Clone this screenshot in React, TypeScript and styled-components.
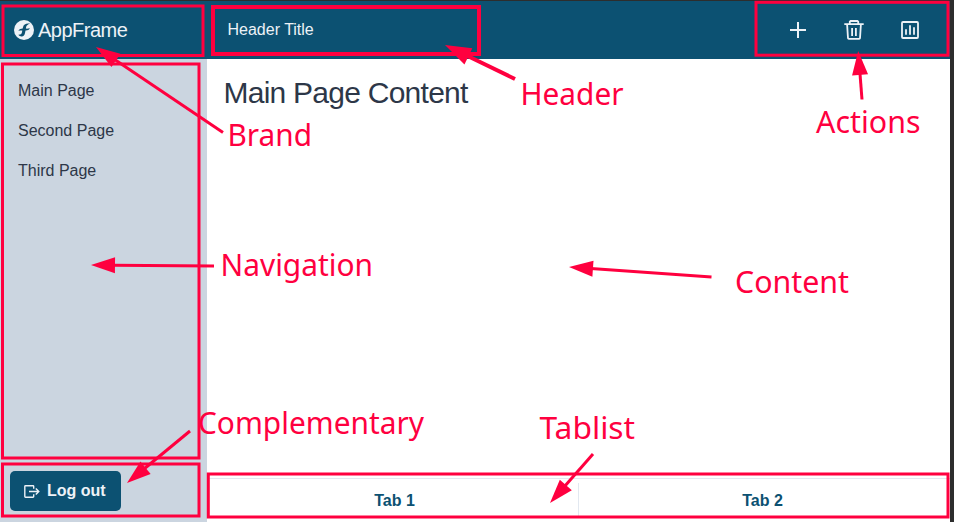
import React from "react";
import styled, { createGlobalStyle } from "styled-components";

const GlobalStyle = createGlobalStyle`
  * { box-sizing: border-box; }
  body { margin: 0; font-family: "Liberation Sans", Arial, sans-serif; font-size: 16px; color: #2d3748; }
`;

const accent = "#ff003f";
const brandBlue = "#0c5172";

const Window = styled.div`
  position: relative;
  width: 954px;
  height: 522px;
  overflow: hidden;
  background: #2d2d2d;
  padding: 1px 4px 0 0;
`;

const Frame = styled.div`
  display: grid;
  grid-template: 58px 1fr / 207px 1fr;
  height: 100%;
  background: #fff;
`;

const TopBar = styled.header`
  grid-column: 1 / -1;
  display: grid;
  grid-template-columns: 207px 1fr auto;
  align-items: center;
  background: ${brandBlue};
  color: #edf2f7;
`;

const Brand = styled.div`
  display: flex;
  align-items: center;
  gap: 4px;
  padding-left: 14px;
  font-size: 20px;
  letter-spacing: -0.5px;
  line-height: 24px;
`;

const HeaderTitle = styled.div`
  padding-left: 20.5px;
  line-height: 20px;
  padding-bottom: 1px;
`;

const Actions = styled.div`
  display: flex;
  gap: 32px;
  padding-right: 28px;
`;

const Sidebar = styled.aside`
  display: flex;
  flex-direction: column;
  background: #cbd5e0;
`;

const Navigation = styled.nav`
  flex: 1;
  display: flex;
  flex-direction: column;
  padding: 12px 18px;
`;

const NavItem = styled.a`
  line-height: 40px;
`;

const Complementary = styled.div`
  padding: 0 10px 11px;
`;

const LogoutButton = styled.button`
  display: flex;
  align-items: center;
  gap: 6px;
  width: 111px;
  height: 40px;
  padding: 0 0 0 13px;
  border: 0;
  border-radius: 5px;
  background: ${brandBlue};
  color: #edf2f7;
  font: bold 16px "Liberation Sans", Arial, sans-serif;
`;

const Main = styled.main`
  display: flex;
  flex-direction: column;
`;

const Content = styled.section`
  flex: 1;
  padding: 16px 16.5px;
`;

const Title = styled.h1`
  margin: 0;
  font-size: 30px;
  font-weight: 400;
  line-height: 36px;
  letter-spacing: -0.75px;
`;

const Tablist = styled.div`
  display: flex;
  height: 44px;
  padding: 4px 4px 0;
  border-top: 1px solid #e2e8f0;
`;

const Tab = styled.div<{ $divided?: boolean }>`
  flex: 1 1 0;
  height: 35px;
  border-right: ${(p) => (p.$divided ? "1px solid #e2e8f0" : "0")};
  text-align: center;
  line-height: 35px;
  font-weight: 700;
  color: ${brandBlue};
`;

const Annotations = styled.svg`
  position: absolute;
  inset: 0;
  fill: none;
  stroke: ${accent};
  stroke-width: 3;
`;

const Label = styled.text`
  fill: ${accent};
  stroke: none;
  font: 400 31px "Noto Sans", sans-serif;
`;

const Icon = styled.svg`
  display: block;
  flex: none;
  fill: none;
  stroke: currentColor;
`;

const frames = [
  { x: 3, y: 6, r: 203, b: 55.5 },
  { x: 2.5, y: 64, r: 199, b: 458 },
  { x: 2.5, y: 464, r: 199, b: 516 },
  { x: 213, y: 7, r: 479, b: 54, w: 4 },
  { x: 756, y: 2.3, r: 948, b: 55.2 },
  { x: 208.3, y: 474, r: 948, b: 517 },
];

const labels = [
  { text: "Brand", x: 227.5, y: 146, w: 84.5 },
  { text: "Header", x: 520.5, y: 104.7, w: 103 },
  { text: "Actions", x: 816, y: 133, w: 104.5 },
  { text: "Navigation", x: 220.5, y: 276, w: 152.5 },
  { text: "Content", x: 735, y: 292.7, w: 114 },
  { text: "Complementary", x: 198, y: 433.7, w: 226 },
  { text: "Tablist", x: 539.5, y: 439, w: 95.5 },
];

const arrows = [
  { from: [223, 132.5], to: [96, 47] },
  { from: [515, 79], to: [445, 45], w: 4 },
  { from: [862, 99.5], to: [858.2, 51] },
  { from: [214, 266], to: [91, 265] },
  { from: [711.5, 277], to: [569, 267] },
  { from: [190, 431], to: [127, 483] },
  { from: [593, 454], to: [550, 503] },
];

function Arrow({ from, to, w = 3 }: { from: number[]; to: number[]; w?: number }) {
  const dx = to[0] - from[0];
  const dy = to[1] - from[1];
  const length = Math.hypot(dx, dy);
  const angle = (Math.atan2(dy, dx) * 180) / Math.PI;
  const head = w === 4 ? 26 : 24;
  const half = w === 4 ? 9 : 8;
  return (
    <g transform={`translate(${from[0]} ${from[1]}) rotate(${angle})`}>
      <path d={`M0 0H${length - head + 2}`} strokeWidth={w} />
      <path d={`M${length} 0l${-head} ${-half}v${half * 2}z`} fill={accent} stroke="none" />
    </g>
  );
}

export default function App() {
  return (
    <>
      <GlobalStyle />
      <Window>
        <Frame>
          <TopBar>
            <Brand>
              <Icon width="20" height="20" viewBox="0 0 20 20">
                <circle cx="10" cy="10" r="10" fill="currentColor" stroke="none" />
                <path
                  d="M16.2 3.6C12.4 3 9.6 4 9 7.2l-.3 1.3C6.800 8.500 5.200 9.200 4.400 11c1.300-.6 2.500-.5 3.900-.4l-.4 2c-.3 1.600-1.500 2.300-3.600 2.200 1 1.200 2.100 1.800 3.300 1.700 2-.1 3-1.600 3.400-3.600l.5-2.300c2.100.1 3.600-.6 4.300-2.500-1.300.5-2.500.6-3.900.5l.2-1.300c.3-1.700 1.300-2.500 4.100-3.700z"
                  fill={brandBlue}
                  stroke="none"
                />
              </Icon>
              AppFrame
            </Brand>
            <HeaderTitle>Header Title</HeaderTitle>
            <Actions>
              <Icon width="24" height="24" viewBox="0 0 24 24" strokeWidth="2">
                <path d="M12 4v16M4 12h16" />
              </Icon>
              <Icon width="24" height="24" viewBox="0 0 24 24" strokeWidth="1.8">
                <path d="M2.3 6.2h19.400M7.800 6V3.700L8.600 3h6.800l.8.700V6M5.100 6.200L6 20.200q.1.700.8.700h10.400q.7 0 .8-.7l.9-14M10.100 10v8M13.900 10v8" />
              </Icon>
              <Icon width="24" height="24" viewBox="0 0 24 24" strokeWidth="1.8">
                <rect x="4" y="4" width="16" height="16" rx="1" />
                <path d="M8 11.300v5.500M12 7.300v9.500M16 9.300v7.500" />
              </Icon>
            </Actions>
          </TopBar>
          <Sidebar>
            <Navigation>
              <NavItem>Main Page</NavItem>
              <NavItem>Second Page</NavItem>
              <NavItem>Third Page</NavItem>
            </Navigation>
            <Complementary>
              <LogoutButton>
                <Icon width="18" height="18" viewBox="0 0 18 18" strokeWidth="1.4">
                  <path d="M10.700 6.700V4.500q0-.7-.7-.7H2.500q-.7 0-.7.700V14.500q0 .7.700.7H10q.7 0 .7-.7V12.300M6 9.500h9.800M12.800 6.500l3 3-3 3" />
                </Icon>
                Log out
              </LogoutButton>
            </Complementary>
          </Sidebar>
          <Main>
            <Content>
              <Title>Main Page Content</Title>
            </Content>
            <Tablist>
              <Tab $divided>Tab 1</Tab>
              <Tab>Tab 2</Tab>
            </Tablist>
          </Main>
        </Frame>
        <Annotations width="954" height="522" viewBox="0 0 954 522">
          {frames.map((f, i) => (
            <rect key={i} x={f.x} y={f.y} width={f.r - f.x} height={f.b - f.y} strokeWidth={f.w ?? 3} />
          ))}
          {arrows.map((a, i) => (
            <Arrow key={i} {...a} />
          ))}
          {labels.map((l) => (
            <Label key={l.text} x={l.x} y={l.y} textLength={l.w} lengthAdjust="spacingAndGlyphs">
              {l.text}
            </Label>
          ))}
        </Annotations>
      </Window>
    </>
  );
}
